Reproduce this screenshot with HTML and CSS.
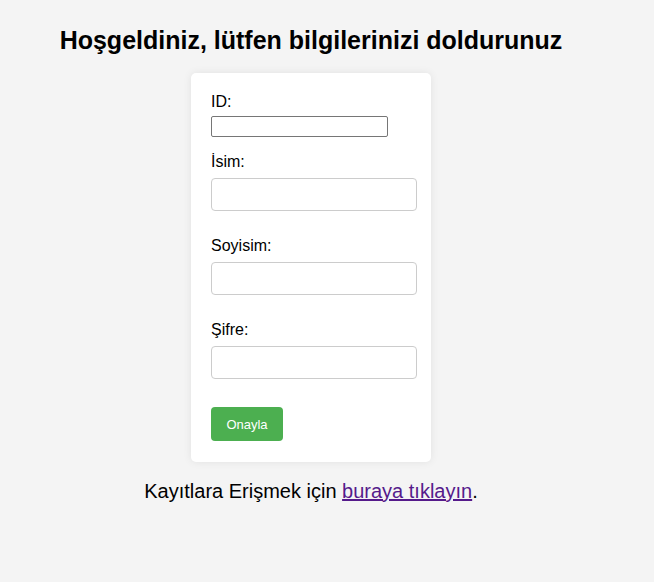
FILE: index.html
```html
<!DOCTYPE html>
<html lang="tr">
<head>
<meta charset="utf-8">
<title>Kayıt</title>
<link rel="stylesheet" href="styles.css">
</head>
<body>
<div class="page">
  <h2 class="title">Hoşgeldiniz, lütfen bilgilerinizi doldurunuz</h2>
  <form class="card">
    <label class="label" for="id">ID:</label>
    <input class="id-input" id="id" type="text">
    <label class="label label-gap" for="isim">İsim:</label>
    <input class="field" id="isim" type="text">
    <label class="label label-gap-lg" for="soyisim">Soyisim:</label>
    <input class="field" id="soyisim" type="text">
    <label class="label label-gap-lg" for="sifre">Şifre:</label>
    <input class="field" id="sifre" type="password">
    <button class="btn" type="button">Onayla</button>
  </form>
  <p class="footer">Kayıtlara Erişmek için <a class="link" href="#">buraya tıklayın</a>.</p>
</div>
</body>
</html>
```

FILE: styles.css
```css
html, body {
  margin: 0;
  padding: 0;
}
body {
  background: #f4f4f4;
  font-family: "Liberation Sans", Arial, sans-serif;
  color: #000;
}
.page {
  width: 622px;
  display: flex;
  flex-direction: column;
  align-items: center;
  padding-top: 26px;
}
.title {
  margin: 0;
  font-size: 25px;
  font-weight: bold;
  line-height: 29px;
}
.card {
  margin-top: 18px;
  width: 240px;
  box-sizing: border-box;
  background: #fff;
  padding: 20px 20px 21px;
  border-radius: 5px;
  box-shadow: 0 0 8px rgba(0, 0, 0, 0.08);
  display: flex;
  flex-direction: column;
  align-items: flex-start;
}
.label {
  font-size: 16px;
  line-height: 18px;
  display: block;
}
.label-gap {
  margin-top: 16px;
}
.label-gap-lg {
  margin-top: 26px;
}
.id-input {
  margin-top: 5px;
  width: 177px;
  height: 21px;
  box-sizing: border-box;
  border: 1px solid #767676;
  border-radius: 2px;
  padding: 1px 2px;
  font-size: 13px;
}
.field {
  margin-top: 7px;
  width: 206px;
  height: 33px;
  box-sizing: border-box;
  border: 1px solid #ccc;
  border-radius: 4px;
  padding: 8px;
  font-size: 13px;
}
.btn {
  margin-top: 28px;
  width: 72px;
  height: 34px;
  background: #4caf50;
  color: #fff;
  border: none;
  border-radius: 4px;
  font-family: "Liberation Sans", Arial, sans-serif;
  font-size: 13px;
  cursor: pointer;
}
.footer {
  margin: 18px 0 0;
  font-size: 20px;
  line-height: 23px;
}
.link {
  color: #551a8b;
}
```
